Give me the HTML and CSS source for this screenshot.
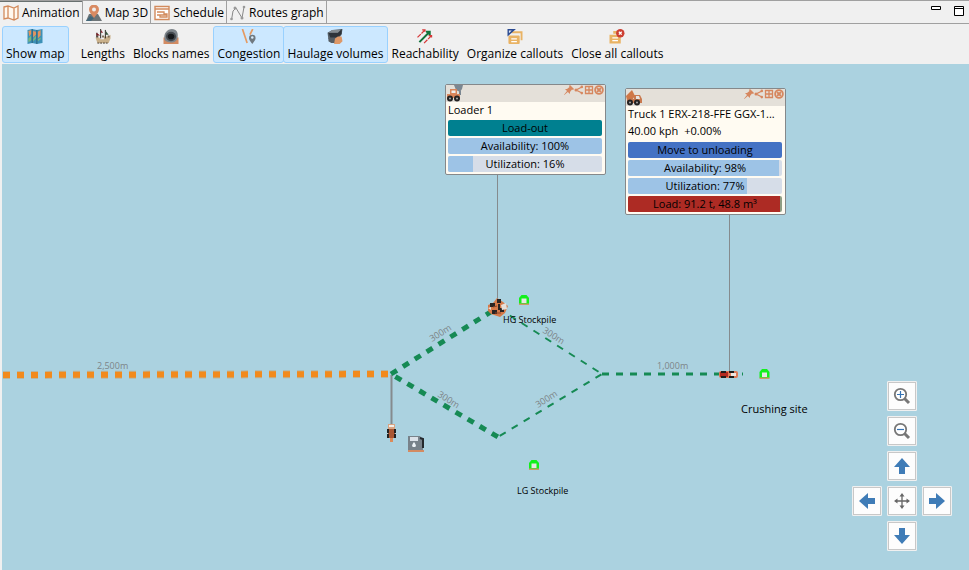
FILE: index.html
```html
<!DOCTYPE html>
<html lang="en">
<head>
<meta charset="utf-8">
<title>Animation</title>
<link rel="stylesheet" href="styles.css">
</head>
<body>
<svg class="defs" aria-hidden="true">
  <symbol id="pin" viewBox="0 0 10 10"><path d="M6 0l4 4-1 1-1-.5L6 7v2L3.800 7 .3 10 0 9.700 3 6 1 4h2l2.500-2L5 1z"/></symbol>
  <symbol id="share" viewBox="0 0 10 10"><path d="M8 2L2 5l6 3" fill="none" stroke="currentColor" stroke-width="1.300"/><circle cx="7.800" cy="1.900" r="1.300"/><circle cx="2" cy="5" r="1.500"/><circle cx="7.800" cy="8.100" r="1.300"/></symbol>
  <symbol id="table" viewBox="0 0 10 10"><path d="M1.500 1.500h7v7h-7zM1.500 5h7M5 2v6" fill="none" stroke="currentColor" stroke-width="1.300"/></symbol>
  <symbol id="close" viewBox="0 0 10 10"><circle cx="5" cy="5" r="3.900" fill="none" stroke="currentColor" stroke-width="1.800"/><path d="M3 3l4 4M7 3L3 7" stroke="currentColor" stroke-width="1.800"/></symbol>
  <symbol id="site" viewBox="0 0 12 12"><path d="M1 10V4l2.500-3h5L11 4v6z" fill="#12f01c"/><path d="M3.500 4.500h5V9h-5z" fill="#e8e8e4"/><path d="M1 9.500h10V11H1z" fill="#c99a67"/></symbol>
</svg>
<header class="tabs">
  <nav class="tablist" role="tablist">
    <button class="tab active" role="tab" aria-selected="true"><svg viewBox="0 0 16 16"><path d="M1 2l4-1 6 2 4-2v12l-4 2-6-2-4 1zM5 1v12M11 3v12" fill="#fff8ef" stroke="#d28a5c" stroke-width="1.300"/></svg>Animation</button>
    <button class="tab" role="tab"><svg viewBox="0 0 16 16"><path d="M0 16l3-7h9l4 7z" fill="#6d7477"/><path d="M0 16l4-5 4 2-3 3z" fill="#42677a"/><path d="M8 13C5 9 3 7 3 4.500a5 5 0 0110 0C13 7 11 9 8 13z" fill="#d98a62"/><circle cx="8" cy="4.500" r="2" fill="#eee"/></svg>Map 3D</button>
    <button class="tab" role="tab"><svg viewBox="0 0 16 16"><path d="M1 1.500h14v13H1z" fill="#fff" stroke="#d28a5c" stroke-width="1.400"/><path d="M1 4h14" stroke="#d28a5c" stroke-width="1.500"/><path d="M3 7h7v2h3v3H6v-2H3M6 10h7" fill="none" stroke="#d28a5c" stroke-width="1.300"/></svg>Schedule</button>
    <button class="tab" role="tab"><svg viewBox="0 0 16 16"><path d="M1.500 15L3 6l3-3 6 10 2-11" fill="none" stroke="#888" stroke-width="1"/><g fill="#999"><circle cx="1.500" cy="14" r="1.300"/><circle cx="5" cy="3" r="1.500"/><circle cx="12" cy="13" r="1.500"/><circle cx="14" cy="2" r="1.300"/></g></svg>Routes graph</button>
  </nav>
  <div class="window-buttons">
    <button aria-label="Minimize"><svg viewBox="0 0 10 10"><path d="M.5.5h9v3h-9z"/></svg></button>
    <button aria-label="Maximize"><svg viewBox="0 0 10 10"><path d="M.5.5h9v9h-9zM.5 2.500h9"/></svg></button>
  </div>
</header>
<div class="toolbar" role="toolbar">
  <button class="tool on first"><svg viewBox="0 0 16 16"><path d="M0 1l5-1 5 1 6-1v15l-6 1-5-1-5 1z" fill="#3d91b7"/><path d="M1 2l3-1v4L2 8zM6 2l3 1v3L6 9zM11 3l3-2v6l-3 3z" fill="#e5935d"/><path d="M1 10l3-3v5l-3 2zM6 11l3-4v3l-3 3zM11 11l3-2v2l-3 2z" fill="#7bb87d"/><path d="M5 0v15M10 1v15" stroke="#285f78"/></svg>Show map</button>
  <button class="tool"><svg viewBox="0 0 16 16"><path d="M0 9h4l1 2h4V8h5l2-2v4l-2 5H2z" fill="#c9b08a"/><path d="M1 7h2v2H1zM7 7h2v2H7zM13 7h2v2h-2z" fill="#7a6b56"/><path d="M1.500 4v5M5.500 0v10M10.500 1v9" stroke="#201c18"/><path d="M1 4l4 3H1zM6 1l2 3H6z" fill="#7d1820"/><path d="M11 2l3 4h-3z" fill="#35553c"/><path d="M2 15h11" stroke="#41352a" stroke-dasharray="2 1"/></svg>Lengths</button>
  <button class="tool"><svg viewBox="0 0 16 16"><path d="M0 9h16v7H0z" fill="#d38b62"/><path d="M1 10C0 5 4 0 9 0s7 4 6 9-5 6-9 5-5-2-5-4z" fill="#7e858b"/><ellipse cx="8" cy="8" rx="5.500" ry="5" fill="#454b51"/><ellipse cx="8" cy="8" rx="3.500" ry="3" fill="#17191c"/></svg>Blocks names</button>
  <button class="tool on"><svg viewBox="0 0 16 16"><path d="M1 0l5 15M12 0L9 6" fill="none" stroke="#e59a62" stroke-width="1.800"/><path d="M11.500 16C9 12.500 8 11.500 8 9.500a3.500 3.500 0 017 0c0 2-1 3-3.500 6.500z" fill="#707980"/><circle cx="11.500" cy="9" r="1.300" fill="#d9efff"/></svg>Congestion</button>
  <button class="tool on joined"><svg viewBox="0 0 16 16"><path d="M0 4l5-3 11-1-1 6-4 5H1z" fill="#555e66"/><path d="M1 4h10l4-4v5l-4 4H3z" fill="#2d3339"/><path d="M5 1h9l-3 3H1z" fill="#838b90"/><path d="M1 9l3 1h5v5H4l-3-2z" fill="#555d63"/><path d="M8 10l3-2h4l1 5-3 3H7z" fill="#de9867"/></svg>Haulage volumes</button>
  <button class="tool"><svg viewBox="0 0 16 16"><path d="M2 14L13 3M9 3h4v4" fill="none" stroke="#10733b" stroke-width="2.200"/><path d="M0 9l8-8M5 1h3v3M7 15l8-8M12 7h3v3" fill="none" stroke="#d63838" stroke-width="1.300" stroke-dasharray="5 1"/></svg>Reachability</button>
  <button class="tool"><svg viewBox="0 0 16 16"><path d="M4 3.500h11V12" fill="none" stroke="#e9b364" stroke-width="2"/><rect x="1" y="7" width="12" height="9" rx="1" fill="#e9b364"/><path d="M4 10.500h6M4 13.500h6" stroke="#fff" stroke-width="1.300"/><path d="M0 0h9L0 8z" fill="#2a4a91"/><path d="M1.500 1.500h3l-3 3z" fill="#e1e7f3"/></svg>Organize callouts</button>
  <button class="tool"><svg viewBox="0 0 16 16"><path d="M4 2h7v3H4zM0 6h12v9.500H0z" fill="#e9b364"/><path d="M3 9.500h6M3 12.500h6" stroke="#fff" stroke-width="1.300"/><circle cx="11.500" cy="4.500" r="4.500" fill="#cd3f32"/><path d="M10 3l3 3M13 3l-3 3" stroke="#fff" stroke-width="1.400"/></svg>Close all callouts</button>
</div>
<main class="map">
  <svg class="network">
    <g transform="translate(-2 -64)">
      <g class="leader"><path d="M497.500 175v127M729.500 215v158"/><path d="M391.500 375v52" stroke-width="2"/></g>
      <path d="M3 375l386-1" stroke="#b9b6a0" stroke-width="8" stroke-dasharray="7 7"/>
      <path d="M3 375l386-1" stroke="#f28a1c" stroke-width="6" stroke-dasharray="7 7"/>
      <g class="route">
        <path class="busy" d="M391 374l106-66"/>
        <path class="busy" d="M391 374l107 63" stroke-dashoffset="-5"/>
        <path d="M498 308l104 66"/><path d="M498 437l104-63" stroke-dashoffset="-2"/><path class="flat" d="M602 374h128M742 374h1"/>
      </g>
      <g class="distance">
        <text x="97" y="369">2,500m</text>
        <text x="657" y="369">1,000m</text>
        <text transform="translate(432 342) rotate(-32)">300m</text>
        <text transform="translate(542 332) rotate(32)">300m</text>
        <text transform="translate(437 396) rotate(32)">300m</text>
        <text transform="translate(538 408) rotate(-32)">300m</text>
      </g>
      <g><path d="M488 305l5-2 4-5 6 4 5 4-3 7-5 4-9-3-3-3z" fill="#d47a4a"/><path d="M490 303h5v4h-5zM497 299h4v4h-4zM492 310h5v4h-5zM500 308h4v4h-4zM498 304h2v6h-2z" fill="#2a2423"/><path d="M501 305l5-2 1 6-5 1zM488 308l3-1v3z" fill="#e5e0db"/><path d="M493 307l4-1M495 313h6" stroke="#8d4427"/></g>
      <g><rect x="388" y="424" width="7" height="14" fill="#a95734"/><path d="M387 429h2v4h-2zM394 429h2v4h-2zM387 434h2v4h-2zM394 434h2v4h-2z" fill="#222"/><path d="M388 424h7v5h-7z" fill="#d9a482"/><path d="M389 425h5v2h-5z" fill="#f2eee9"/><path d="M390 438h3v4h-3z" fill="#dc8b5a"/></g>
      <g><path d="M408 436h12l3 4v10h-15z" fill="#78828a"/><path d="M410 437h8v4h-8z" fill="#dbe1e8"/><path d="M414 442c-3 4-2 5 0 5s3-1 0-5z" fill="#edf2f6"/><path d="M420 438l3 1v9" fill="none" stroke="#24282c" stroke-width="2"/><path d="M408 450h16v2h-16z" fill="#d38b62"/></g>
      <g><rect x="719" y="371" width="19" height="7" rx="2" fill="#df7b58"/><path d="M720 372h8v5h-8z" fill="#b42a20"/><path d="M721 371h5v2h-5zM721 376h5v2h-5zM729 371h5v2h-5zM729 376h5v2h-5z" fill="#211d1c"/><path d="M731 373h5v3h-5z" fill="#f0e8e2"/></g>
      <use href="#site" x="518" y="294" width="12" height="12"/>
      <use href="#site" x="528" y="459" width="12" height="12"/>
      <use href="#site" x="758" y="368" width="13" height="12"/>
      <g class="place"><text x="503" y="323">HG Stockpile</text><text x="517" y="494">LG Stockpile</text><text class="large" x="741" y="413">Crushing site</text></g>
    </g>
  </svg>

  <section class="callout loader">
    <header><svg class="vehicle" viewBox="0 0 18 18"><path d="M8 0h9l-1 4-2 3-4-2z" fill="#7b8791"/><path d="M14 6v4" stroke="#7b8791" stroke-width="2"/><path d="M1 13V9h3V4h7v5h3v4z" fill="#d9855a"/><path d="M5.500 5.500h4V8h-4z" fill="#eee"/><circle cx="4" cy="13.500" r="3" fill="#242323"/><circle cx="11" cy="13.500" r="3" fill="#242323"/><circle cx="4" cy="13.500" r="1" fill="#aaa"/><circle cx="11" cy="13.500" r="1" fill="#aaa"/></svg>
      <button aria-label="Pin"><svg><use href="#pin"/></svg></button><button aria-label="Share"><svg><use href="#share"/></svg></button><button aria-label="Table"><svg><use href="#table"/></svg></button><button aria-label="Close"><svg><use href="#close"/></svg></button></header>
    <p>Loader 1</p>
    <div class="bar state-loading"><span>Load-out</span></div>
    <div class="bar"><i style="width:100%"></i><span>Availability: 100%</span></div>
    <div class="bar"><i style="width:16%"></i><span>Utilization: 16%</span></div>
  </section>

  <section class="callout truck">
    <header><svg class="vehicle" viewBox="0 0 18 18"><path d="M0 7l6-6 3 6-3 4H1z" fill="#cf7746"/><path d="M1 14V9l7 1V6h6l2 4v4z" fill="#c9794f"/><path d="M10 7h3l1 3h-4z" fill="#e8e4df"/><circle cx="4" cy="13.500" r="3" fill="#242323"/><circle cx="11" cy="13.500" r="3" fill="#242323"/><circle cx="4" cy="13.500" r="1" fill="#aaa"/><circle cx="11" cy="13.500" r="1" fill="#aaa"/></svg>
      <button aria-label="Pin"><svg><use href="#pin"/></svg></button><button aria-label="Share"><svg><use href="#share"/></svg></button><button aria-label="Table"><svg><use href="#table"/></svg></button><button aria-label="Close"><svg><use href="#close"/></svg></button></header>
    <p>Truck 1 ERX-218-FFE GGX-1...</p>
    <p class="speed"><span>40.00 kph</span><span>+0.00%</span></p>
    <div class="bar state-moving"><span>Move to unloading</span></div>
    <div class="bar"><i style="width:98%"></i><span>Availability: 98%</span></div>
    <div class="bar"><i style="width:77%"></i><span>Utilization: 77%</span></div>
    <div class="bar load"><i style="width:99%"></i><span>Load: 91.2 t, 48.8 m³</span></div>
  </section>

  <div class="pad">
    <button class="mid" aria-label="Zoom in"><svg viewBox="0 0 18 18"><path d="M11 11l5 5" stroke="#777" stroke-width="3"/><circle cx="7.500" cy="7.500" r="5.700" fill="#fff" stroke="#777" stroke-width="1.800"/><path d="M4 7.500h7M7.500 4v7" stroke="#3674b5" stroke-width="1.200"/></svg></button>
    <button class="mid" aria-label="Zoom out"><svg viewBox="0 0 18 18"><path d="M11 11l5 5" stroke="#777" stroke-width="3"/><circle cx="7.500" cy="7.500" r="5.700" fill="#fff" stroke="#777" stroke-width="1.800"/><path d="M4 7.500h7" stroke="#3674b5" stroke-width="1.200"/></svg></button>
    <button class="mid" aria-label="Pan up"><svg viewBox="0 0 18 18"><path d="M9 1l8 9h-5v7H6v-7H1z" fill="#3f7cb7"/></svg></button>
    <button class="start" aria-label="Pan left"><svg viewBox="0 0 18 18"><path d="M1 9l9-8v5h7v6h-7v5z" fill="#3f7cb7"/></svg></button>
    <button aria-label="Fit to view"><svg viewBox="0 0 18 18"><path d="M9 3v12M3 9h12" stroke="#666" stroke-width="1.300"/><path d="M9 1l2.500 3.500h-5zM9 17l2.500-3.500h-5zM1 9l3.500-2.500v5zM17 9l-3.500-2.500v5z" fill="#666"/></svg></button>
    <button aria-label="Pan right"><svg viewBox="0 0 18 18"><path d="M17 9l-9-8v5H1v6h7v5z" fill="#3f7cb7"/></svg></button>
    <button class="mid" aria-label="Pan down"><svg viewBox="0 0 18 18"><path d="M9 17l8-9h-5V1H6v7H1z" fill="#3f7cb7"/></svg></button>
  </div>
</main>
</body>
</html>
```
FILE: styles.css
```css
* { box-sizing: border-box; }
body {
  margin: 0;
  min-height: 100vh;
  display: flex;
  flex-direction: column;
  background: #f0f0f0;
  color: #000;
  font: 12px/16px "Open Sans", "Noto Sans", sans-serif;
}
button {
  margin: 0;
  padding: 0;
  border: 0;
  background: none;
  color: inherit;
  font: inherit;
  white-space: nowrap;
}
svg { display: block; }
.defs { position: absolute; width: 0; height: 0; }

.tabs {
  display: flex;
  justify-content: space-between;
  height: 24px;
  border-top: 1px solid #a0a0a0;
  border-bottom: 1px solid #a0a0a0;
}
.tablist { display: flex; }
.tab {
  display: flex;
  align-items: center;
  gap: 3px;
  height: 22px;
  padding: 1px 2px 0 3px;
  border-right: 1px solid #a0a0a0;
}
.tab svg { width: 16px; height: 16px; }
.tab.active {
  height: 23px;
  background: #f0f0f0;
  box-shadow: inset 0 1px #68706f;
}
.window-buttons { display: flex; gap: 13px; padding: 5px 5px 0 0; }
.window-buttons button { width: 10px; height: 10px; }
.window-buttons path { fill: #fff; stroke: #000; }

.toolbar { display: flex; padding: 2px 2px 1px; }
.tool {
  display: flex;
  flex-direction: column;
  align-items: center;
  gap: 2px;
  height: 37px;
  padding: 2px 3px 0;
  border: 1px solid transparent;
  border-radius: 3px;
}
.tool svg { width: 16px; height: 16px; }
.tool.on { background: #cce8ff; border-color: #99d1ff; }
.tool.first { margin-right: 8px; }
.tool.joined { margin-left: -1px; }

.map {
  position: relative;
  flex: 1;
  min-height: 500px;
  margin-left: 2px;
  background: #abd2e0;
  overflow: hidden;
}
.network { position: absolute; inset: 0; width: 100%; height: 100%; }
.leader { stroke: #858b8e; }
.route { stroke: #168a54; stroke-width: 2; stroke-dasharray: 7 7; }
.route .busy { stroke-width: 5; }
.route .flat { stroke-width: 3; }
.distance { fill: #7d8588; font-size: 9px; }
.place { font-size: 9px; }
.place .large { font-size: 11px; }

.callout {
  position: absolute;
  width: 161px;
  border: 1px solid #85888a;
  border-radius: 2px;
  background: #fffbf2;
  font-size: 11px;
}
.loader { left: 443px; top: 20px; }
.truck { left: 623px; top: 24px; }
.callout header {
  display: flex;
  height: 17px;
  padding-right: 1px;
  background: #e4e0d9;
  color: #d6875f;
}
.callout header svg { width: 10px; height: 10px; fill: currentColor; }
.callout header .vehicle { width: 18px; height: 18px; margin-right: auto; }
.callout header button { height: 10px; }
.callout p { margin: 0; padding: 0 2px 1px; line-height: 16px; white-space: nowrap; }
.callout .speed { display: flex; gap: 6px; padding-bottom: 2px; }
.bar {
  display: grid;
  height: 16px;
  margin: 1px 3px 2px 2px;
  border-radius: 2px;
  background: #d6dde8;
  line-height: 16px;
  text-align: center;
  overflow: hidden;
}
.bar + .bar { margin-top: 0; }
.bar i, .bar span { grid-area: 1 / 1; }
.bar i { background: #9dc3e6; }
.bar.state-loading { background: #008090; }
.bar.state-moving { background: #4472c4; }
.bar.load { background: #8f9d84; }
.bar.load i { background: #ad2b24; }

.pad {
  position: absolute;
  right: 17px;
  bottom: 19px;
  display: grid;
  grid-template-columns: repeat(3, 30px);
  gap: 5px;
}
.pad button {
  display: grid;
  place-items: center;
  height: 30px;
  border: 1px solid #f0f0f0;
  border-radius: 1px;
  background: #fdfdfd;
  box-shadow: inset 0 0 0 1px #c8c8c8;
}
.pad svg { width: 18px; height: 18px; }
.pad .mid { grid-column: 2; }
.pad .start { grid-column: 1; }
```
